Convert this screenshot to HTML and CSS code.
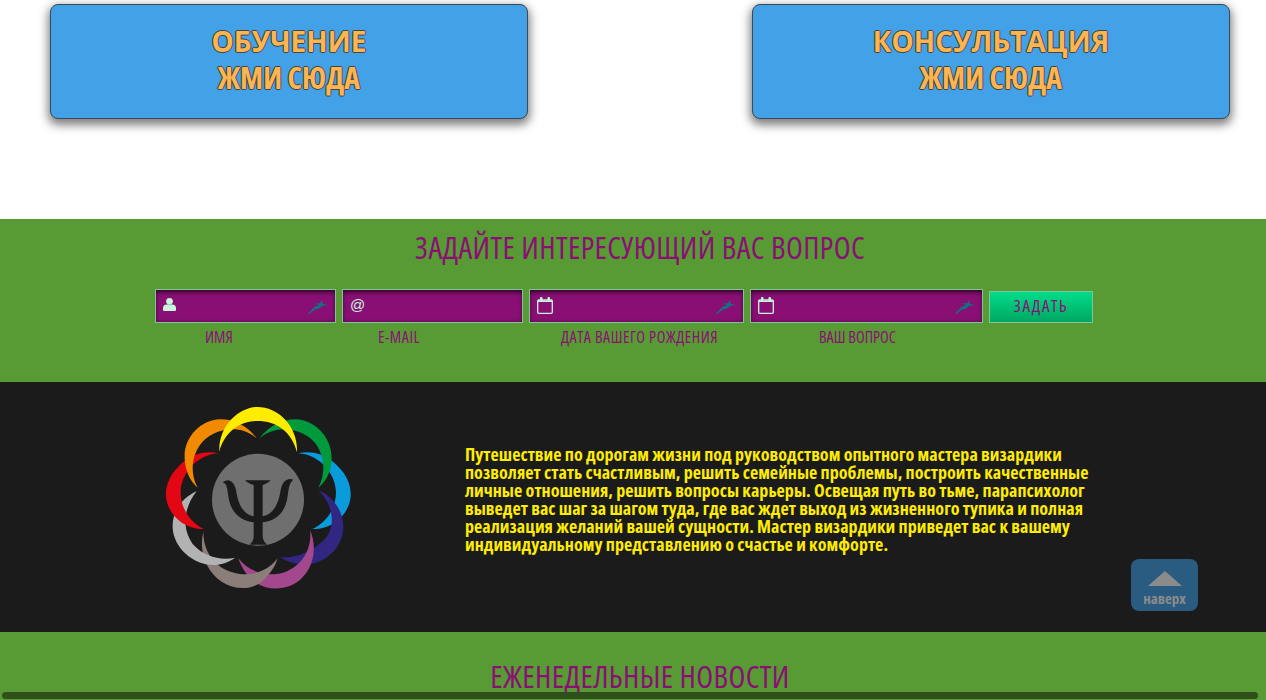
FILE: index.html
```html
<!DOCTYPE html>
<html lang="ru">
<head>
    <meta charset="UTF-8">
    <meta name="viewport" content="width=device-width, initial-scale=1.0">
    <title>Визардика</title>
    <link rel="stylesheet" href="styles.css">
</head>
<body>
    <section class="cta">
        <a class="cta-btn" href="#"><span class="cta-main">ОБУЧЕНИЕ</span><span class="cta-sub">ЖМИ СЮДА</span></a>
        <a class="cta-btn" href="#"><span class="cta-main">КОНСУЛЬТАЦИЯ</span><span class="cta-sub">ЖМИ СЮДА</span></a>
    </section>

    <section class="ask">
        <h2 class="ask-title">ЗАДАЙТЕ ИНТЕРЕСУЮЩИЙ ВАС ВОПРОС</h2>
        <form class="ask-form">
            <div class="field field-name">
                <div class="field-box">
                    <svg class="ico" viewBox="0 0 14 16"><circle cx="7" cy="4.500" r="3.600" fill="#c6f5dc"/><path d="M1 15c-.6 0-1-.4-1-1v-2.500C0 9.300 2 8 4 8h6c2 0 4 1.300 4 3.500V14c0 .6-.4 1-1 1z" fill="#c6f5dc"/></svg>
                    <svg class="run" viewBox="0 0 20 14"><path d="M0 13.500L7 6.500L11 5.500L7 3L12 3.500L14 0L14.500 4L20 5L14 6L11 8.500L7 9.500L1 14Z" fill="#0f7482"/></svg>
                </div>
                <label>ИМЯ</label>
            </div>
            <div class="field field-mail">
                <div class="field-box"><span class="at">@</span></div>
                <label class="label-wide">E-MAIL</label>
            </div>
            <div class="field field-date">
                <div class="field-box">
                    <svg class="ico-cal" viewBox="0 0 16 17"><rect x=".7" y="3" width="14.600" height="13.300" rx="1" fill="none" stroke="#c6f5dc" stroke-width="1.300"/><path d="M.7 3.500h14.600V5H.7z" fill="#c6f5dc"/><rect x="3" y="0" width="2.500" height="4" rx="1" fill="#c6f5dc"/><rect x="10.500" y="0" width="2.500" height="4" rx="1" fill="#c6f5dc"/></svg>
                    <svg class="run" viewBox="0 0 20 14"><path d="M0 13.500L7 6.500L11 5.500L7 3L12 3.500L14 0L14.500 4L20 5L14 6L11 8.500L7 9.500L1 14Z" fill="#0f7482"/></svg>
                </div>
                <label class="label-wide">ДАТА ВАШЕГО РОЖДЕНИЯ</label>
            </div>
            <div class="field field-question">
                <div class="field-box">
                    <svg class="ico-cal" viewBox="0 0 16 17"><rect x=".7" y="3" width="14.600" height="13.300" rx="1" fill="none" stroke="#c6f5dc" stroke-width="1.300"/><path d="M.7 3.500h14.600V5H.7z" fill="#c6f5dc"/><rect x="3" y="0" width="2.500" height="4" rx="1" fill="#c6f5dc"/><rect x="10.500" y="0" width="2.500" height="4" rx="1" fill="#c6f5dc"/></svg>
                    <svg class="run" viewBox="0 0 20 14"><path d="M0 13.500L7 6.500L11 5.500L7 3L12 3.500L14 0L14.500 4L20 5L14 6L11 8.500L7 9.500L1 14Z" fill="#0f7482"/></svg>
                </div>
                <label>ВАШ ВОПРОС</label>
            </div>
            <button class="ask-send" type="button">ЗАДАТЬ</button>
        </form>
    </section>

    <section class="about">
        <svg class="logo" viewBox="0 0 660 615">
            <path fill="#0a9bdc" d="M445 175C480 165 530 175 565 215C610 260 615 320 575 365C550 392 520 402 487 402C525 385 558 345 558 290C556 235 510 180 445 175Z"/>
            <path fill="#312783" d="M505 285C550 305 582 350 580 400C578 455 530 505 470 508C440 510 410 500 390 485C430 492 480 475 522 435C560 395 550 330 505 285Z"/>
            <path fill="#a3488c" d="M480 405C500 450 495 510 455 550C420 585 360 590 320 565C295 550 275 520 265 490C290 522 330 542 380 537C445 528 488 470 480 405Z"/>
            <path fill="#8b7d78" d="M160 410C145 470 170 530 215 560C260 590 320 585 350 545C365 530 378 510 382 490C360 522 320 542 270 537C205 528 160 480 160 410Z"/>
            <path fill="#b2b2b2" d="M140 288C95 310 65 350 68 400C72 460 130 510 190 510C215 510 240 500 255 488C215 497 163 487 128 447C95 400 100 340 140 288Z"/>
            <path fill="#e30613" d="M205 175C170 165 120 175 85 215C40 260 35 320 75 365C100 392 130 402 162 402C125 385 92 345 92 290C94 235 140 180 205 175Z"/>
            <path fill="#f18a00" d="M320 130C290 90 250 72 210 73C150 75 100 130 104 190C105 225 120 260 143 278C122 240 122 190 150 150C180 105 265 80 320 130Z"/>
            <path fill="#009a3d" d="M328 130C360 90 400 72 440 73C500 78 545 130 545 190C545 225 530 260 505 278C526 240 526 190 500 150C470 105 385 80 328 130Z"/>
            <path fill="#ffed00" d="M208 170C205 90 270 36 322 36C385 36 445 95 441 172C425 110 380 78 322 78C265 78 222 115 208 170Z"/>
            <circle cx="324" cy="314" r="138" fill="#6f6f6f"/>
            <path fill="#1b1b1b" d="M218 262C235 248 252 258 258 285C265 330 280 358 311 364V270C303 268 292 264 285 256H362C355 264 345 268 338 270V364C369 358 385 330 392 285C398 256 414 248 430 254C416 265 416 285 412 310C405 350 380 378 338 382V425C339 436 345 443 352 449H298C305 443 311 436 311 425V382C270 378 243 350 236 310C232 285 232 265 218 262Z"/>
        </svg>
        <p class="about-text">Путешествие по дорогам жизни под руководством опытного мастера визардики<br>позволяет стать счастливым, решить семейные проблемы, построить качественные<br>личные отношения, решить вопросы карьеры. Освещая путь во тьме, парапсихолог<br>выведет вас шаг за шагом туда, где вас ждет выход из жизненного тупика и полная<br>реализация желаний вашей сущности. Мастер визардики приведет вас к вашему<br>индивидуальному представлению о счастье и комфорте.</p>
    </section>

    <section class="news">
        <h2 class="news-title">ЕЖЕНЕДЕЛЬНЫЕ НОВОСТИ</h2>
    </section>

    <a class="to-top" href="#"><span class="to-top-arrow"></span>наверх</a>
    <div class="scroll-thumb"></div>
</body>
</html>
```

FILE: styles.css
```css
* {
    box-sizing: border-box;
}
html, body {
    height: 700px;
    overflow: hidden;
}
body {
    margin: 0;
    font-family: "Open Sans", sans-serif;
    font-stretch: 75%;
    background: #fff;
}
.cta {
    height: 219px;
    padding: 4px 36px 0 50px;
    display: flex;
    justify-content: space-between;
    align-items: flex-start;
}
.cta-btn {
    width: 478px;
    height: 115px;
    padding-top: 18px;
    display: flex;
    flex-direction: column;
    align-items: center;
    background: #42a1e7;
    border: 1px solid #3a4a58;
    border-radius: 8px;
    box-shadow: 0 4px 10px 2px rgba(0, 0, 0, 0.5);
    color: #ffb54f;
    text-decoration: none;
    font-weight: bold;
    text-shadow: -1px 0 #444, 1px 0 #444, 0 -1px #444, 0 1px #444;
}
.cta-main {
    font-size: 28px;
    font-stretch: 92%;
    line-height: 36px;
}
.cta-sub {
    font-size: 30px;
    line-height: 37px;
}
.ask {
    height: 163px;
    background: #589a34;
    padding-top: 9px;
}
.ask-title, .news-title {
    margin: 0;
    padding-left: 14px;
    font-weight: normal;
    font-size: 31px;
    letter-spacing: 0.35px;
    line-height: 38px;
    color: #8a0f75;
    text-align: center;
}
.ask-form {
    margin-top: 23px;
    padding-left: 155px;
    display: flex;
    gap: 6px;
    align-items: flex-start;
}
.field label {
    display: block;
    margin-top: 5px;
    font-size: 16px;
    line-height: 18px;
    color: #8a0f75;
    white-space: nowrap;
}
.field .label-wide {
    letter-spacing: 0.55px;
}
.field-box {
    height: 34px;
    padding: 7px 7px;
    display: flex;
    justify-content: space-between;
    background: #8a0f75;
    border: 1px solid #7fc49b;
    box-shadow: inset 0 5px 5px -3px rgba(0, 0, 0, 0.6), inset 0 0 4px rgba(0, 0, 0, 0.4);
}
.field-name { width: 181px; }
.field-mail { width: 181px; }
.field-date { width: 215px; }
.field-question { width: 233px; }
.field-name label { padding-left: 50px; }
.field-mail label { padding-left: 36px; }
.field-date label { padding-left: 32px; }
.field-question label { padding-left: 69px; }
.ico {
    width: 13px;
    height: 15px;
}
.ico-cal {
    width: 16px;
    height: 17px;
}
.run {
    width: 20px;
    height: 14px;
    margin-top: 3px;
}
.at {
    font-family: "Liberation Sans", sans-serif;
    font-stretch: normal;
    font-size: 15px;
    line-height: 15px;
    color: #c6f5dc;
}
.ask-send {
    width: 104px;
    height: 32px;
    margin-top: 2px;
    padding: 0 0 3px;
    background: linear-gradient(to bottom, #00dc8a, #00a862);
    border: 1px solid #7fc49b;
    color: #8a0f75;
    font-family: inherit;
    font-stretch: inherit;
    font-size: 17px;
    letter-spacing: 1.6px;
}
.about {
    height: 250px;
    background: #1b1b1b;
    display: flex;
    align-items: flex-start;
}
.logo {
    width: 220px;
    height: 205px;
    margin: 13px 0 0 150px;
    flex: none;
}
.about-text {
    margin: 63px 0 0 95px;
    font-size: 18px;
    letter-spacing: 0.05px;
    line-height: 18px;
    font-weight: bold;
    color: #ffed00;
    white-space: nowrap;
}
.news {
    height: 68px;
    background: #589a34;
    padding-top: 25px;
}
.to-top {
    position: fixed;
    left: 1131px;
    top: 559px;
    width: 67px;
    height: 52px;
    padding-top: 12px;
    display: flex;
    flex-direction: column;
    align-items: center;
    background: #295c80;
    border-radius: 8px;
    color: #8b8b8b;
    font-weight: bold;
    font-size: 15px;
    line-height: 17px;
    text-decoration: none;
}
.to-top-arrow {
    width: 0;
    height: 0;
    margin-bottom: 4px;
    border-left: 17px solid transparent;
    border-right: 17px solid transparent;
    border-bottom: 15px solid #8b8b8b;
}
.scroll-thumb {
    position: fixed;
    left: 2px;
    top: 692px;
    width: 1256px;
    height: 7px;
    background: #2f4f1b;
    border-radius: 4px;
}
```
